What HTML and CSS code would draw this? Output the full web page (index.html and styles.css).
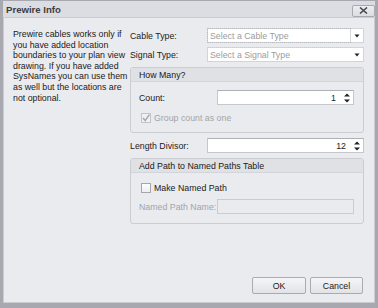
FILE: index.html
```html
<!DOCTYPE html>
<html>
<head>
<meta charset="utf-8">
<link rel="stylesheet" href="styles.css">
</head>
<body>
<div class="window">
  <div class="titlebar">
    <span class="title">Prewire Info</span>
    <span class="close"><svg width="9" height="7" viewBox="0 0 9 7"><path d="M1 0.5 L8 6.5 M8 0.5 L1 6.5" stroke="#4a4b50" stroke-width="1.6"/></svg></span>
  </div>
  <div class="client">
    <div class="main">
      <p class="info">Prewire cables works only if<br>you have added location<br>boundaries to your plan view<br>drawing. If you have added<br>SysNames you can use them<br>as well but the locations are<br>not optional.</p>
      <div class="form">
        <div class="row">
          <span class="label">Cable Type:</span>
          <div class="combo focused">
            <span class="placeholder">Select a Cable Type</span>
            <span class="drop"><svg width="6" height="4" viewBox="0 0 6 4"><path d="M0.5 0.5 H5.5 L3 3.5 Z" fill="#222"/></svg></span>
          </div>
        </div>
        <div class="row">
          <span class="label">Signal Type:</span>
          <div class="combo">
            <span class="placeholder">Select a Signal Type</span>
            <span class="drop"><svg width="6" height="4" viewBox="0 0 6 4"><path d="M0.5 0.5 H5.5 L3 3.5 Z" fill="#222"/></svg></span>
          </div>
        </div>
        <div class="group group-count">
          <div class="group-head">How Many?</div>
          <div class="group-body">
            <div class="row inner">
              <span class="label ilabel">Count:</span>
              <div class="spin">
                <span class="value">1</span>
                <span class="arrows"><svg width="6" height="10" viewBox="0 0 6 10"><path d="M0 3.5 L3 0.5 L6 3.5 Z M0 6.5 L3 9.5 L6 6.5 Z" fill="#222"/></svg></span>
              </div>
            </div>
            <div class="check-row">
              <span class="box disabled"><svg width="10" height="10" viewBox="0 0 10 10"><path d="M2 5 L4.2 7.6 L8.3 1.6" fill="none" stroke="#a6a7ab" stroke-width="1.5"/></svg></span>
              <span class="check-text muted">Group count as one</span>
            </div>
          </div>
        </div>
        <div class="row">
          <span class="label">Length Divisor:</span>
          <div class="spin">
            <span class="value">12</span>
            <span class="arrows"><svg width="6" height="10" viewBox="0 0 6 10"><path d="M0 3.5 L3 0.5 L6 3.5 Z M0 6.5 L3 9.5 L6 6.5 Z" fill="#222"/></svg></span>
          </div>
        </div>
        <div class="group group-path">
          <div class="group-head">Add Path to Named Paths Table</div>
          <div class="group-body">
            <div class="check-row">
              <span class="box"></span>
              <span class="check-text">Make Named Path</span>
            </div>
            <div class="row inner">
              <span class="label ilabel muted">Named Path Name:</span>
              <div class="textbox"></div>
            </div>
          </div>
        </div>
      </div>
    </div>
    <div class="buttons">
      <button class="btn ok">OK</button>
      <button class="btn cancel">Cancel</button>
    </div>
  </div>
</div>
</body>
</html>
```
FILE: styles.css
```css
* { box-sizing: border-box; }
html, body { margin: 0; padding: 0; }
body {
  width: 378px;
  height: 308px;
  font-family: "Liberation Sans", Arial, sans-serif;
  font-size: 8.8px;
  color: #1a1a1a;
  background: #a7a8b0;
}
.window {
  width: 378px;
  height: 308px;
  display: flex;
  flex-direction: column;
  border-style: solid;
  border-color: #a7a8b0;
  border-width: 1px 3px 5px 3px;
  background: #dcdde2;
}
.titlebar {
  height: 16px;
  display: flex;
  align-items: center;
  justify-content: space-between;
  padding: 0 0 0 3px;
}
.title {
  font-weight: bold;
  font-size: 9.6px;
  color: #3c3d42;
}
.close {
  width: 23px;
  height: 12px;
  margin-top: 3px;
  border: 1px solid #a9aab1;
  border-radius: 2px;
  background: linear-gradient(#ecedf0, #dcdde1);
  display: flex;
  align-items: center;
  justify-content: center;
}
.client {
  flex: 1;
  display: flex;
  flex-direction: column;
  border: 1px solid #cbccd2;
  background: #eaebef;
  padding: 10px 10px 8px 9px;
}
.main {
  flex: 1;
  display: flex;
  gap: 4px;
}
.info {
  width: 113px;
  margin: 1px 0 0 0;
  line-height: 10.6px;
  white-space: nowrap;
}
.form {
  flex: 1;
  display: flex;
  flex-direction: column;
}
.row {
  height: 15px;
  display: flex;
  align-items: center;
  margin-bottom: 4px;
}
.label {
  width: 77px;
  flex: none;
}
.ilabel { width: 78px; }
.combo, .spin, .textbox {
  flex: 1;
  height: 15px;
  background: #fff;
  border: 1px solid #d2d4d9;
  display: flex;
  align-items: center;
}
.combo.focused .placeholder {
  outline: 1px dotted #b9bac0;
  outline-offset: 0;
  align-self: stretch;
  display: flex;
  align-items: center;
  flex: 1;
}
.placeholder {
  color: #9c9ca0;
  padding-left: 2px;
  flex: 1;
}
.drop {
  width: 13px;
  height: 100%;
  display: flex;
  align-items: center;
  justify-content: center;
}
.combo.focused .drop { border-left: 1px solid #d8d9de; }
.spin { border-color: #c5c7cc; border-top-color: #aeb0b5; }
.value {
  flex: 1;
  text-align: right;
  padding-right: 5px;
}
.arrows {
  width: 12px;
  display: flex;
  justify-content: center;
  align-items: center;
}
.group {
  border: 1px solid #cbcdd2;
  border-radius: 3px;
  margin-bottom: 5px;
  margin-top: 1px;
}
.group-head {
  height: 14px;
  background: #dfe1e5;
  border-bottom: 1px solid #d3d5da;
  padding-left: 8px;
  display: flex;
  align-items: center;
  border-radius: 2px 2px 0 0;
}
.group-body {
  padding: 8px 9px 9px 8px;
}
.group-count .group-body .row { margin-bottom: 8px; }
.group-path .group-body { padding-top: 10px; }
.group-path .group-body .check-row { margin-bottom: 6px; }
.group-path .group-body .row { margin-bottom: 0; }
.check-row {
  height: 10px;
  display: flex;
  align-items: center;
  padding-left: 2px;
}
.box {
  width: 10px;
  height: 10px;
  border: 1px solid #a4a6ab;
  background: linear-gradient(#fdfdfd, #eceef1);
  display: flex;
  margin-right: 3px;
}
.box svg { margin: -1px; }
.box.disabled { border-color: #c2c3c8; background: #f0f1f3; }
.muted { color: #a3a4a8; }
.textbox { background: #eaebef; border-color: #c9cbd0; }
.buttons {
  display: flex;
  justify-content: flex-end;
  gap: 4px;
  padding-right: 1px;
}
.btn {
  height: 17px;
  border: 1px solid #a9abb1;
  border-radius: 2px;
  background: linear-gradient(#f5f5f7, #e2e3e7);
  font-family: "Liberation Sans", Arial, sans-serif;
  font-size: 8.8px;
  color: #1a1a1a;
  padding: 0;
}
.ok { width: 54px; }
.cancel { width: 53px; }
```
